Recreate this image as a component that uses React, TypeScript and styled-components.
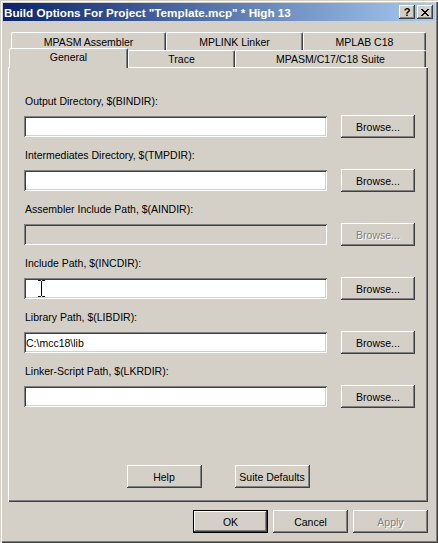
import React from 'react';
import styled, { createGlobalStyle, css } from 'styled-components';

const face = '#d4d0c8';

const GlobalStyle = createGlobalStyle`
  html, body {
    margin: 0;
    padding: 0;
    background: ${face};
  }
  body {
    font-family: 'Liberation Sans', Arial, sans-serif;
    font-size: 10.5px;
    color: #000;
  }
`;

const raised = css`
  box-shadow: inset -1px -1px #404040, inset 1px 1px #ffffff, inset -2px -2px #808080,
    inset 2px 2px ${face};
`;

const sunken = css`
  box-shadow: inset 1px 1px #808080, inset -1px -1px #ffffff, inset 2px 2px #404040,
    inset -2px -2px ${face};
`;

const Window = styled.div`
  width: 438px;
  height: 543px;
  box-sizing: border-box;
  padding: 3px;
  display: flex;
  flex-direction: column;
  background: ${face};
  box-shadow: inset 1px 1px ${face}, inset 2px 2px #ffffff, inset -1px -1px #404040,
    inset -2px -2px #808080;
`;

const TitleBar = styled.div`
  height: 18px;
  display: flex;
  align-items: center;
  justify-content: space-between;
  padding: 0 2px 0 1px;
  background: linear-gradient(to right, #0a246a, #a6caf0);
`;

const Title = styled.span`
  color: #fff;
  font-weight: bold;
  font-size: 11.7px;
  white-space: nowrap;
`;

const CaptionButtons = styled.div`
  display: flex;
  gap: 2px;
`;

const CaptionButton = styled.div`
  width: 16px;
  height: 14px;
  box-sizing: border-box;
  display: flex;
  align-items: center;
  justify-content: center;
  background: ${face};
  font-weight: bold;
  font-size: 11px;
  line-height: 14px;
  ${raised};
`;

const Body = styled.div`
  flex: 1;
  display: flex;
  flex-direction: column;
  padding: 11px 7px 0 5px;
`;

const TabRow = styled.div<{ $front?: boolean }>`
  display: flex;
  padding-left: 3px;
  height: ${(p) => (p.$front ? 17 : 18)}px;
`;

const Tab = styled.div<{ $w: number; $active?: boolean }>`
  width: ${(p) => p.$w}px;
  height: 100%;
  box-sizing: border-box;
  display: flex;
  align-items: center;
  justify-content: center;
  background: ${face};
  border-top: 1px solid #fff;
  border-left: 1px solid #fff;
  border-right: 1px solid #404040;
  border-radius: 2px 2px 0 0;
  box-shadow: inset -1px 0 #808080;
  white-space: nowrap;
  ${(p) =>
    p.$active &&
    css`
      height: 20px;
      margin-top: -2px;
      margin-left: -2px;
      padding-bottom: 3px;
      position: relative;
      z-index: 1;
    `}
`;

const Panel = styled.div`
  height: 435px;
  box-sizing: border-box;
  display: flex;
  flex-direction: column;
  padding: 27px 0 14px 0;
  box-shadow: inset 1px 1px #fff, inset -1px -1px #404040, inset -2px -2px #808080;
`;

const Fields = styled.div`
  display: flex;
  flex-direction: column;
  gap: 10px;
  padding-left: 16px;
`;

const Field = styled.div`
  display: flex;
  flex-direction: column;
  gap: 7px;
`;

const Label = styled.div`
  height: 14px;
  line-height: 14px;
  padding-left: 1px;
  white-space: nowrap;
`;

const Controls = styled.div`
  display: flex;
  align-items: center;
  gap: 14px;
  height: 23px;
`;

const InputWrap = styled.div`
  position: relative;
  width: 303px;
  height: 21px;
`;

const TextBox = styled.input`
  width: 100%;
  height: 100%;
  box-sizing: border-box;
  border: none;
  outline: none;
  margin: 0;
  padding: 0 2px;
  font: inherit;
  color: #000;
  background: #fff;
  ${sunken};
  &:disabled {
    background: ${face};
  }
`;

const IBeam = styled.svg`
  position: absolute;
  left: 13px;
  top: 2px;
`;

const Button = styled.button<{ $w?: number; $default?: boolean }>`
  width: ${(p) => p.$w ?? 75}px;
  height: 23px;
  box-sizing: border-box;
  margin: 0;
  padding: 0;
  border: none;
  background: ${face};
  font: inherit;
  color: #000;
  ${raised};
  ${(p) =>
    p.$default &&
    css`
      border: 1px solid #000;
    `}
  &:disabled {
    color: #808080;
    text-shadow: 1px 1px #fff;
  }
`;

const PanelButtons = styled.div`
  margin-top: auto;
  display: flex;
  justify-content: center;
  gap: 33px;
`;

const Footer = styled.div`
  margin-top: 8px;
  display: flex;
  justify-content: flex-end;
  gap: 5px;
`;

const CloseGlyph = () => (
  <svg width="8" height="7" viewBox="0 0 8 7" shapeRendering="crispEdges">
    <path
      fill="#000"
      d="M0 0h2v1H0zM6 0h2v1H6zM1 1h2v1H1zM5 1h2v1H5zM2 2h4v1H2zM3 3h2v1H3zM2 4h4v1H2zM1 5h2v1H1zM5 5h2v1H5zM0 6h2v1H0zM6 6h2v1H6z"
    />
  </svg>
);

type FieldDef = {
  label: string;
  value?: string;
  disabled?: boolean;
  cursor?: boolean;
};

const fields: FieldDef[] = [
  { label: 'Output Directory, $(BINDIR):' },
  { label: 'Intermediates Directory, $(TMPDIR):' },
  { label: 'Assembler Include Path, $(AINDIR):', disabled: true },
  { label: 'Include Path, $(INCDIR):', cursor: true },
  { label: 'Library Path, $(LIBDIR):', value: 'C:\\mcc18\\lib' },
  { label: 'Linker-Script Path, $(LKRDIR):' },
];

const App = () => {
  return (
    <React.Fragment>
      <GlobalStyle />
      <Window>
        <TitleBar>
          <Title>Build Options For Project "Template.mcp" * High 13</Title>
          <CaptionButtons>
            <CaptionButton>?</CaptionButton>
            <CaptionButton>
              <CloseGlyph />
            </CaptionButton>
          </CaptionButtons>
        </TitleBar>
        <Body>
          <TabRow>
            <Tab $w={155}>MPASM Assembler</Tab>
            <Tab $w={137}>MPLINK Linker</Tab>
            <Tab $w={123}>MPLAB C18</Tab>
          </TabRow>
          <TabRow $front>
            <Tab $w={119} $active>
              General
            </Tab>
            <Tab $w={107}>Trace</Tab>
            <Tab $w={191}>MPASM/C17/C18 Suite</Tab>
          </TabRow>
          <Panel>
            <Fields>
              {fields.map((f) => (
                <Field key={f.label}>
                  <Label>{f.label}</Label>
                  <Controls>
                    <InputWrap>
                      <TextBox readOnly defaultValue={f.value ?? ''} disabled={f.disabled} />
                      {f.cursor && (
                        <IBeam width="9" height="17" viewBox="0 0 9 17">
                          <path
                            d="M1 0.5h2.5l1 1l1-1H8M4.5 1.5v14M1 16.5h2.5l1-1l1 1H8"
                            stroke="#000"
                            strokeWidth="1"
                            fill="none"
                          />
                        </IBeam>
                      )}
                    </InputWrap>
                    <Button $w={74} disabled={f.disabled}>
                      Browse...
                    </Button>
                  </Controls>
                </Field>
              ))}
            </Fields>
            <PanelButtons>
              <Button>Help</Button>
              <Button>Suite Defaults</Button>
            </PanelButtons>
          </Panel>
          <Footer>
            <Button $default>OK</Button>
            <Button>Cancel</Button>
            <Button disabled>Apply</Button>
          </Footer>
        </Body>
      </Window>
    </React.Fragment>
  );
};

export default App;
